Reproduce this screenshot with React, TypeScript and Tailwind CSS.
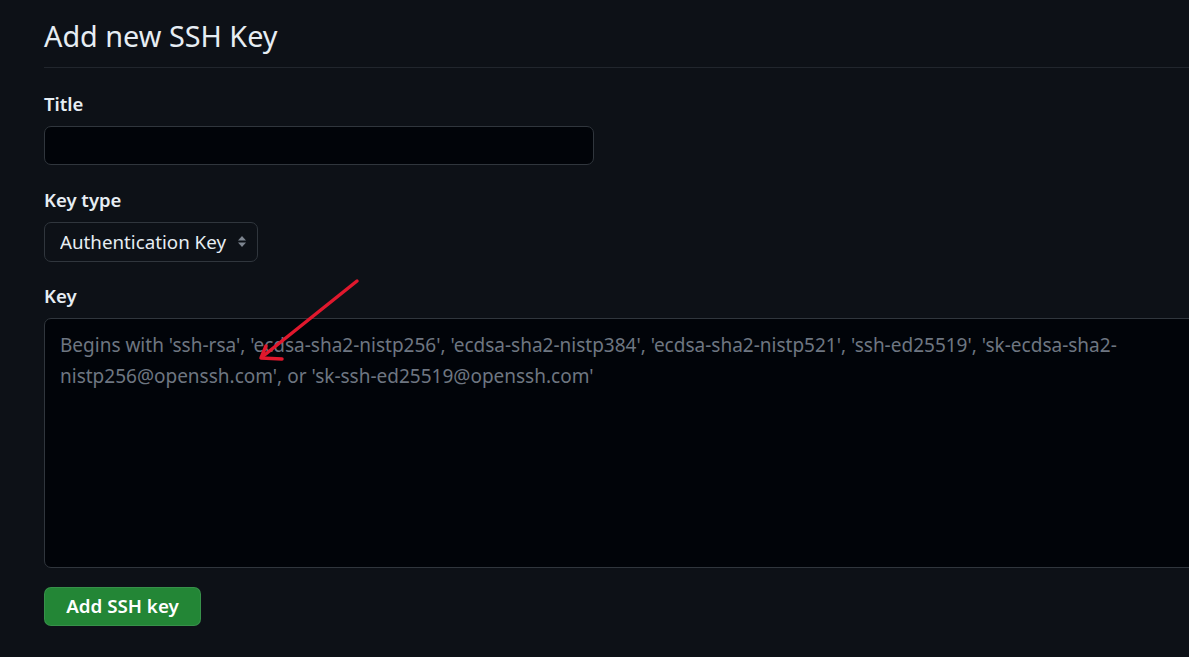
export default function App() {
  const font = "font-['Segoe_UI','Noto_Sans','Open_Sans',sans-serif]";
  return (
    <div className={`relative min-h-screen w-full overflow-hidden bg-[#0d1117] text-[#e6edf3] ${font}`}>
      <div className="w-[1200px] pl-[44px] pt-[17px]">
        <h1 className="border-b border-[#21262d] pb-[12px] text-[28.8px] font-normal leading-[38px]">
          Add new SSH Key
        </h1>

        <form className="flex flex-col">
          <label className="mt-[23px] text-[18.5px] font-semibold leading-[26px]">Title</label>
          <input
            type="text"
            className="mt-[9px] h-[39px] w-[550px] rounded-[7px] border border-[#30363d] bg-[#010409] px-[15px] text-[18.75px] outline-none"
          />

          <label className="mt-[22px] text-[18.5px] font-semibold leading-[26px]">Key type</label>
          <div className="relative mt-[9px] h-[40px] w-[214px]">
            <select className="h-full w-full appearance-none rounded-[7px] border border-[#30363d] bg-[#0d1117] pl-[15px] text-[18.75px] text-[#e6edf3] outline-none">
              <option>Authentication Key</option>
              <option>Signing Key</option>
            </select>
            <svg
              className="pointer-events-none absolute right-[12px] top-[14px]"
              width="8"
              height="11"
              viewBox="0 0 8 11"
              fill="#7d8590"
            >
              <path d="M4 0 L8 4.5 H0 Z" />
              <path d="M0 6.5 H8 L4 11 Z" />
            </svg>
          </div>

          <label className="mt-[21px] text-[18.5px] font-semibold leading-[26px]">Key</label>
          <textarea
            className="mt-[9px] h-[250px] w-[1156px] resize-none rounded-[7px] border border-[#30363d] bg-[#010409] px-[15px] pt-[11px] text-[19px] leading-[31px] text-[#e6edf3] outline-none placeholder:text-[#6e7681]"
            placeholder="Begins with 'ssh-rsa', 'ecdsa-sha2-nistp256', 'ecdsa-sha2-nistp384', 'ecdsa-sha2-nistp521', 'ssh-ed25519', 'sk-ecdsa-sha2-nistp256@openssh.com', or 'sk-ssh-ed25519@openssh.com'"
          />

          <div className="mt-[19px]">
            <button
              type="button"
              className="h-[39px] w-[157px] rounded-[7px] border border-[rgba(240,246,252,0.1)] bg-[#238636] text-[18.75px] font-semibold text-white"
            >
              Add SSH key
            </button>
          </div>
        </form>
      </div>

      <svg
        className="pointer-events-none absolute left-0 top-0"
        width="1189"
        height="657"
        viewBox="0 0 1189 657"
        fill="none"
        stroke="#e0182d"
        strokeWidth="3.5"
        strokeLinecap="round"
        strokeLinejoin="round"
      >
        <path d="M357 281 L262 357" />
        <path d="M266 346 L261 358 L282 359" />
      </svg>
    </div>
  );
}
